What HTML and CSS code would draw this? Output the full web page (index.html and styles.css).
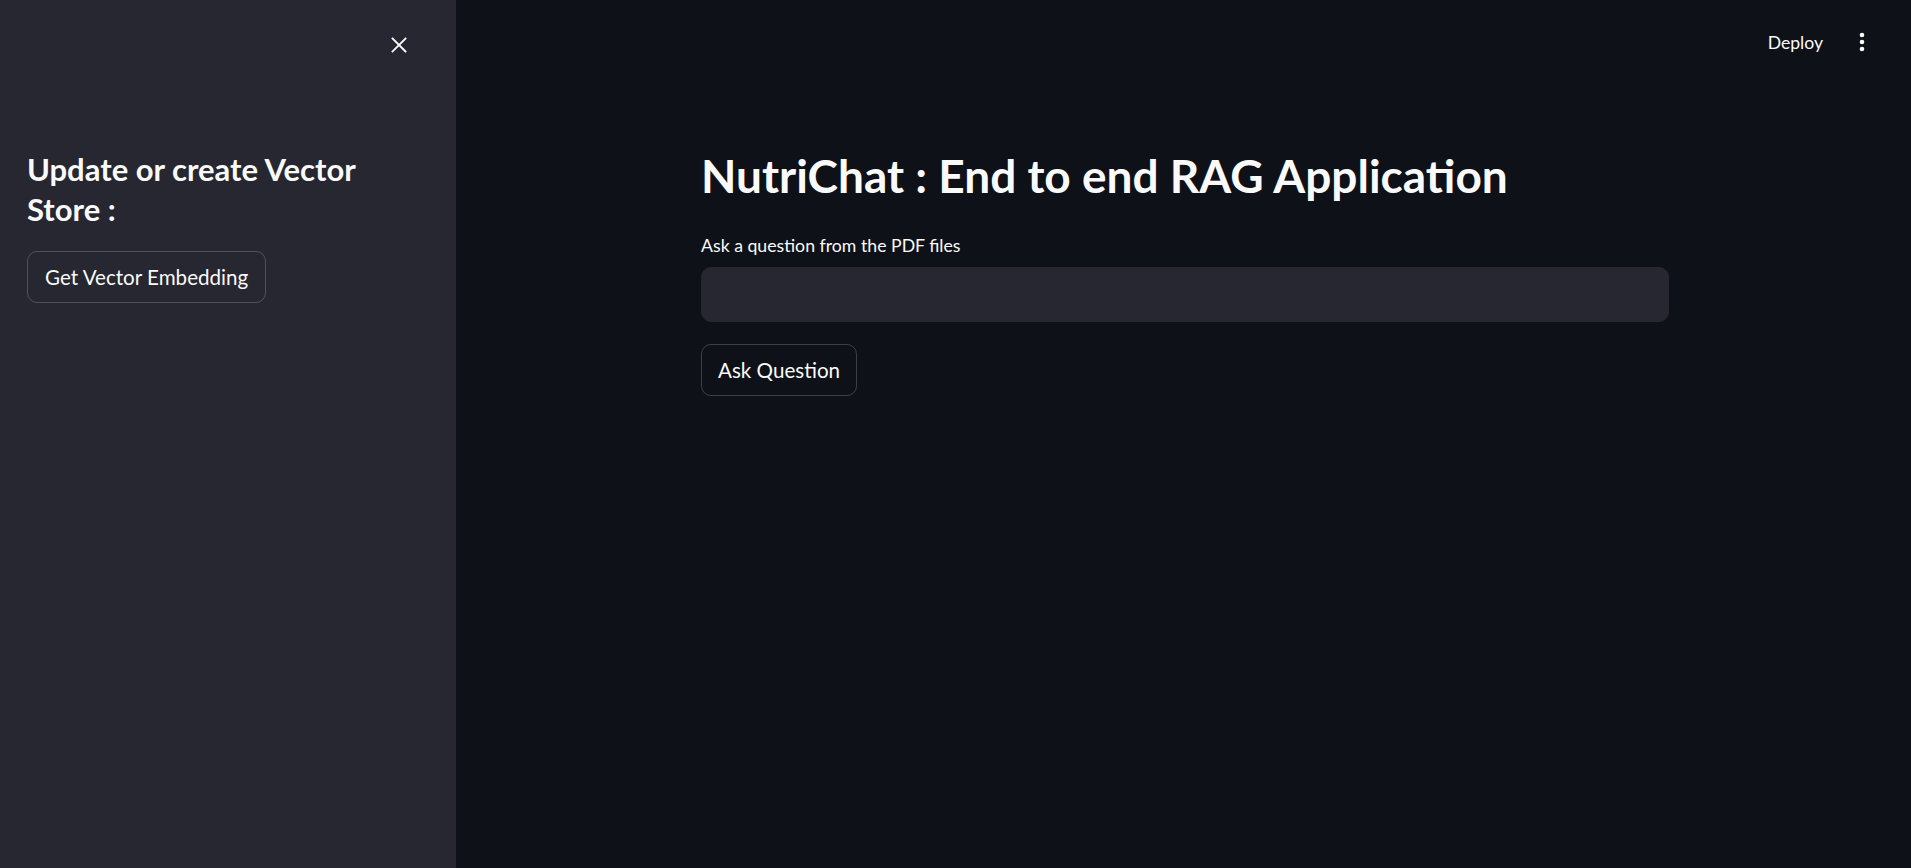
FILE: index.html
```html
<!DOCTYPE html>
<html lang="en">
<head>
<meta charset="utf-8">
<title>NutriChat</title>
<link rel="stylesheet" href="styles.css">
</head>
<body>
<div class="app">
  <aside class="sidebar">
    <div class="sb-top">
      <button class="close-btn" aria-label="Close sidebar">
        <svg width="16" height="16" viewBox="0 0 16 16"><path d="M1.5 1.5 L14.5 14.5 M14.5 1.5 L1.5 14.5" stroke="#fafafa" stroke-width="1.8" stroke-linecap="square" fill="none"/></svg>
      </button>
    </div>
    <div class="sb-content">
      <h2 class="sb-heading">Update or create Vector Store :</h2>
      <button class="st-btn">Get Vector Embedding</button>
    </div>
  </aside>
  <main class="main">
    <header class="topbar">
      <span class="deploy">Deploy</span>
      <button class="menu-btn" aria-label="Main menu">
        <svg width="16" height="20" viewBox="0 0 16 20"><circle cx="8" cy="3" r="2.3" fill="#fafafa"/><circle cx="8" cy="10" r="2.3" fill="#fafafa"/><circle cx="8" cy="17" r="2.3" fill="#fafafa"/></svg>
      </button>
    </header>
    <section class="content">
      <h1 class="title">NutriChat : End to end RAG Application</h1>
      <label class="field-label" for="q">Ask a question from the PDF files</label>
      <input id="q" class="text-input" type="text">
      <button class="st-btn ask-btn">Ask Question</button>
    </section>
  </main>
</div>
</body>
</html>
```
FILE: styles.css
```css
* { box-sizing: border-box; }
html, body { margin: 0; padding: 0; height: 100%; }
body {
  font-family: "Source Sans Pro", "Lato", sans-serif;
  color: #fafafa;
  background: #0e1117;
}
button { font-family: inherit; }
.app { display: flex; height: 868px; }

.sidebar {
  width: 456px;
  flex: none;
  background: #262730;
  display: flex;
  flex-direction: column;
}
.sb-top {
  height: 90px;
  display: flex;
  align-items: center;
  justify-content: flex-end;
  padding-right: 41px;
}
.close-btn {
  width: 32px; height: 32px;
  background: none; border: none; padding: 0;
  display: flex; align-items: center; justify-content: center;
}
.sb-content { padding: 0 27px; }
.sb-heading {
  margin: 59px 0 0;
  font-size: 31px;
  line-height: 40px;
  font-weight: 700;
  color: #fafafa;
}
.st-btn {
  height: 52px;
  padding: 0 17px;
  background: transparent;
  color: #fafafa;
  border: 1px solid rgba(250, 250, 250, 0.2);
  border-radius: 10px;
  font-size: 20.6px;
  font-weight: 400;
  display: inline-flex;
  align-items: center;
}
.sb-content .st-btn { margin-top: 22px; }

.main {
  flex: 1;
  background: #0e1117;
  display: flex;
  flex-direction: column;
  padding-left: 3px;
}
.topbar {
  height: 84px;
  display: flex;
  align-items: center;
  justify-content: flex-end;
  padding-right: 41px;
}
.deploy {
  font-size: 17.6px;
  margin-right: 31px;
  margin-top: 1px;
}
.menu-btn {
  width: 16px; height: 20px;
  background: none; border: none; padding: 0;
  display: flex;
}
.content {
  width: 968px;
  margin: 0 auto;
  display: flex;
  flex-direction: column;
  align-items: flex-start;
}
.title {
  margin: 64px 0 0;
  font-size: 46px;
  line-height: 55px;
  font-weight: 700;
  color: #fafafa;
}
.field-label {
  margin-top: 30px;
  font-size: 17.7px;
  line-height: 25px;
  color: #fafafa;
}
.text-input {
  margin-top: 9px;
  width: 100%;
  height: 55px;
  background: #262730;
  border: 1px solid #262730;
  border-radius: 10px;
  color: #fafafa;
  font-family: inherit;
  font-size: 20px;
  padding: 0 16px;
  outline: none;
}
.ask-btn { margin-top: 22px; padding: 0 16px; }
```
